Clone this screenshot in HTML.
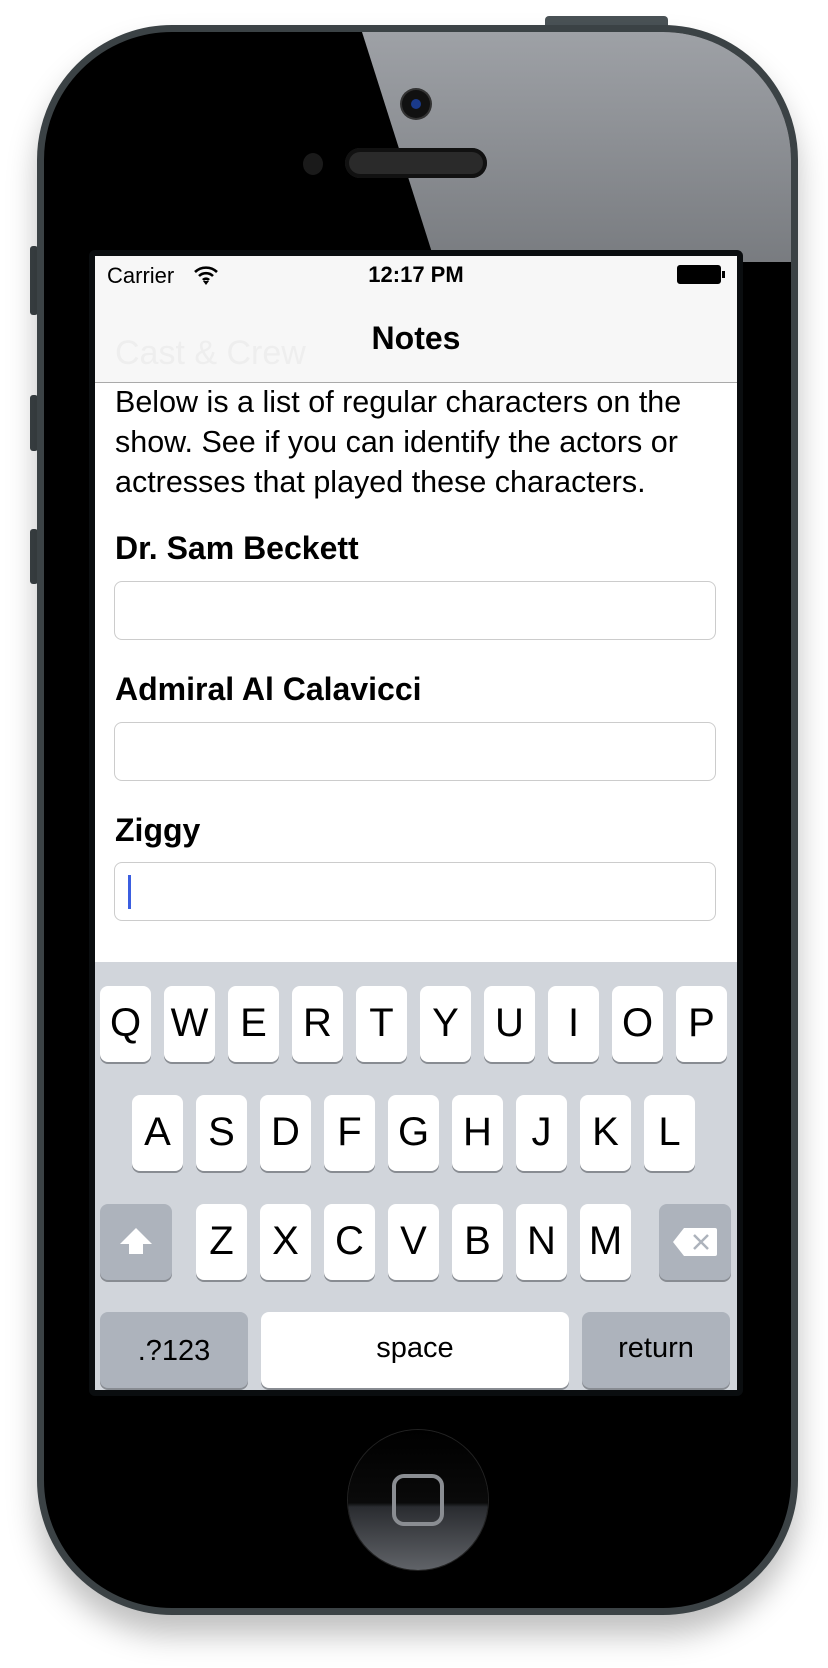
<!DOCTYPE html>
<html><head><meta charset="utf-8"><style>
*{margin:0;padding:0;box-sizing:border-box}
body{width:828px;height:1668px;background:#fff;position:relative;overflow:hidden;font-family:"Liberation Sans",Arial,sans-serif}
.abs{position:absolute}
.phone{left:37px;top:25px;width:761px;height:1590px;border-radius:135px;background:#000;border:7px solid #3b4245;box-shadow:0 20px 30px rgba(0,0,0,.25);overflow:hidden}
.gray{left:0;top:0;width:761px;height:400px;background:linear-gradient(180deg,#9ea1a6,#5d6064);clip-path:polygon(318px 0,761px 0,761px 230px,391px 230px)}
.screen{left:95px;top:256px;width:642px;height:1134px;background:#fff;overflow:hidden}
.key{position:absolute;width:51px;height:76px;background:#fff;border-radius:8px;box-shadow:0 2px 0 #888c92;font-size:40px;text-align:center;line-height:74px;color:#000}
.dk{background:#adb3bc}
.lbl{position:absolute;left:20px;font-size:32px;font-weight:bold}
.fld{position:absolute;left:19px;width:602px;height:59px;border:1px solid #ccc;border-radius:8px}
.btn{position:absolute;left:30px;width:8px;background:#3b4245;border-radius:3px}
</style></head><body>
<div class="abs" style="left:545px;top:16px;width:123px;height:12px;background:#4a5256;border-radius:4px 4px 0 0"></div>
<div class="btn" style="top:246px;height:69px"></div>
<div class="btn" style="top:395px;height:56px"></div>
<div class="btn" style="top:529px;height:55px"></div>
<div class="abs phone"><div class="abs gray"></div></div>
<div class="abs" style="left:402px;top:90px;width:28px;height:28px;border-radius:50%;background:#111;box-shadow:0 0 0 2px #333"><div style="margin:9px;width:10px;height:10px;border-radius:50%;background:#1a3a8a"></div></div>
<div class="abs" style="left:303px;top:153px;width:20px;height:22px;border-radius:50%;background:#1a1a1a"></div>
<div class="abs" style="left:345px;top:148px;width:142px;height:30px;border-radius:15px;background:#2a2a2a;box-shadow:inset 0 0 0 4px #111"></div>
<div class="abs" style="left:89px;top:250px;width:654px;height:1146px;background:#0a0d0f;border-radius:6px"></div>
<div class="abs screen">
 <div class="abs" style="left:0;top:0;width:642px;height:127px;background:#f7f7f7;border-bottom:1px solid #aaa"></div>
 <div class="abs" style="left:12px;top:7px;font-size:22px">Carrier</div>
 <svg class="abs" style="left:98px;top:9px" width="26" height="20" viewBox="0 0 26 20"><path d="M2 7a16 16 0 0 1 22 0M6 11a10 10 0 0 1 14 0M10 15a4 4 0 0 1 6 0" stroke="#000" stroke-width="2.6" fill="none"/><path d="M10 16l3 4 3-4z"/></svg>
 <div class="abs" style="left:0;width:642px;top:6px;text-align:center;font-size:22px;font-weight:bold">12:17 PM</div>
 <div class="abs" style="left:582px;top:9px;width:44px;height:19px;border:2px solid #000;border-radius:3px;background:#000"></div>
 <div class="abs" style="left:627px;top:15px;width:3px;height:7px;background:#000"></div>
 <div class="abs" style="left:20px;top:78px;font-size:34px;color:#eee">Cast &amp; Crew</div>
 <div class="abs" style="left:0;width:642px;top:64px;text-align:center;font-size:32px;font-weight:bold">Notes</div>
 <div class="abs" style="left:20px;top:126px;font-size:30.5px;line-height:40px;width:612px">Below is a list of regular characters on the show. See if you can identify the actors or actresses that played these characters.</div>
 <div class="lbl" style="top:274px">Dr. Sam Beckett</div>
 <div class="fld" style="top:325px"></div>
 <div class="lbl" style="top:415px">Admiral Al Calavicci</div>
 <div class="fld" style="top:466px"></div>
 <div class="lbl" style="top:556px">Ziggy</div>
 <div class="fld" style="top:606px"><div style="position:absolute;left:13px;top:12px;width:3px;height:34px;background:#3b5ee0"></div></div>
 <div class="abs" style="left:0;top:706px;width:642px;height:428px;background:#d1d5db">
  <div style="position:absolute;left:5px;top:24px">
   <div class="key" style="left:0">Q</div><div class="key" style="left:64px">W</div><div class="key" style="left:128px">E</div><div class="key" style="left:192px">R</div><div class="key" style="left:256px">T</div><div class="key" style="left:320px">Y</div><div class="key" style="left:384px">U</div><div class="key" style="left:448px">I</div><div class="key" style="left:512px">O</div><div class="key" style="left:576px">P</div>
   <div class="key" style="left:32px;top:109px">A</div><div class="key" style="left:96px;top:109px">S</div><div class="key" style="left:160px;top:109px">D</div><div class="key" style="left:224px;top:109px">F</div><div class="key" style="left:288px;top:109px">G</div><div class="key" style="left:352px;top:109px">H</div><div class="key" style="left:416px;top:109px">J</div><div class="key" style="left:480px;top:109px">K</div><div class="key" style="left:544px;top:109px">L</div>
   <div class="key dk" style="left:0;top:218px;width:72px"><svg width="40" height="36" viewBox="0 0 40 36" style="margin-top:20px"><path d="M20 4L4 20h9v10h14V20h9z" fill="#fff"/></svg></div>
   <div class="key" style="left:96px;top:218px">Z</div><div class="key" style="left:160px;top:218px">X</div><div class="key" style="left:224px;top:218px">C</div><div class="key" style="left:288px;top:218px">V</div><div class="key" style="left:352px;top:218px">B</div><div class="key" style="left:416px;top:218px">N</div><div class="key" style="left:480px;top:218px">M</div>
   <div class="key dk" style="left:559px;top:218px;width:72px"><svg width="46" height="30" viewBox="0 0 46 30" style="margin-top:23px"><path d="M12 1h31a2 2 0 0 1 2 2v24a2 2 0 0 1-2 2H12L1 15z" fill="#fff"/><path d="M22 8l14 14M36 8L22 22" stroke="#adb3bc" stroke-width="2.5"/></svg></div>
   <div class="key dk" style="left:0;top:326px;width:148px;font-size:29px;line-height:78px">.?123</div>
   <div class="key" style="left:161px;top:326px;width:308px;font-size:29px;line-height:72px">space</div>
   <div class="key dk" style="left:482px;top:326px;width:148px;font-size:29px;line-height:72px">return</div>
  </div>
 </div>
</div>
<div class="abs" style="left:348px;top:1430px;width:140px;height:140px;border-radius:50%;background:linear-gradient(180deg,#000 0%,#0a0a0a 52%,#2a2c30 55%,#606368 100%);box-shadow:0 0 0 1px #222"></div>
<div class="abs" style="left:392px;top:1474px;width:52px;height:52px;border-radius:12px;border:4px solid #8a8d92"></div>
</body></html>
